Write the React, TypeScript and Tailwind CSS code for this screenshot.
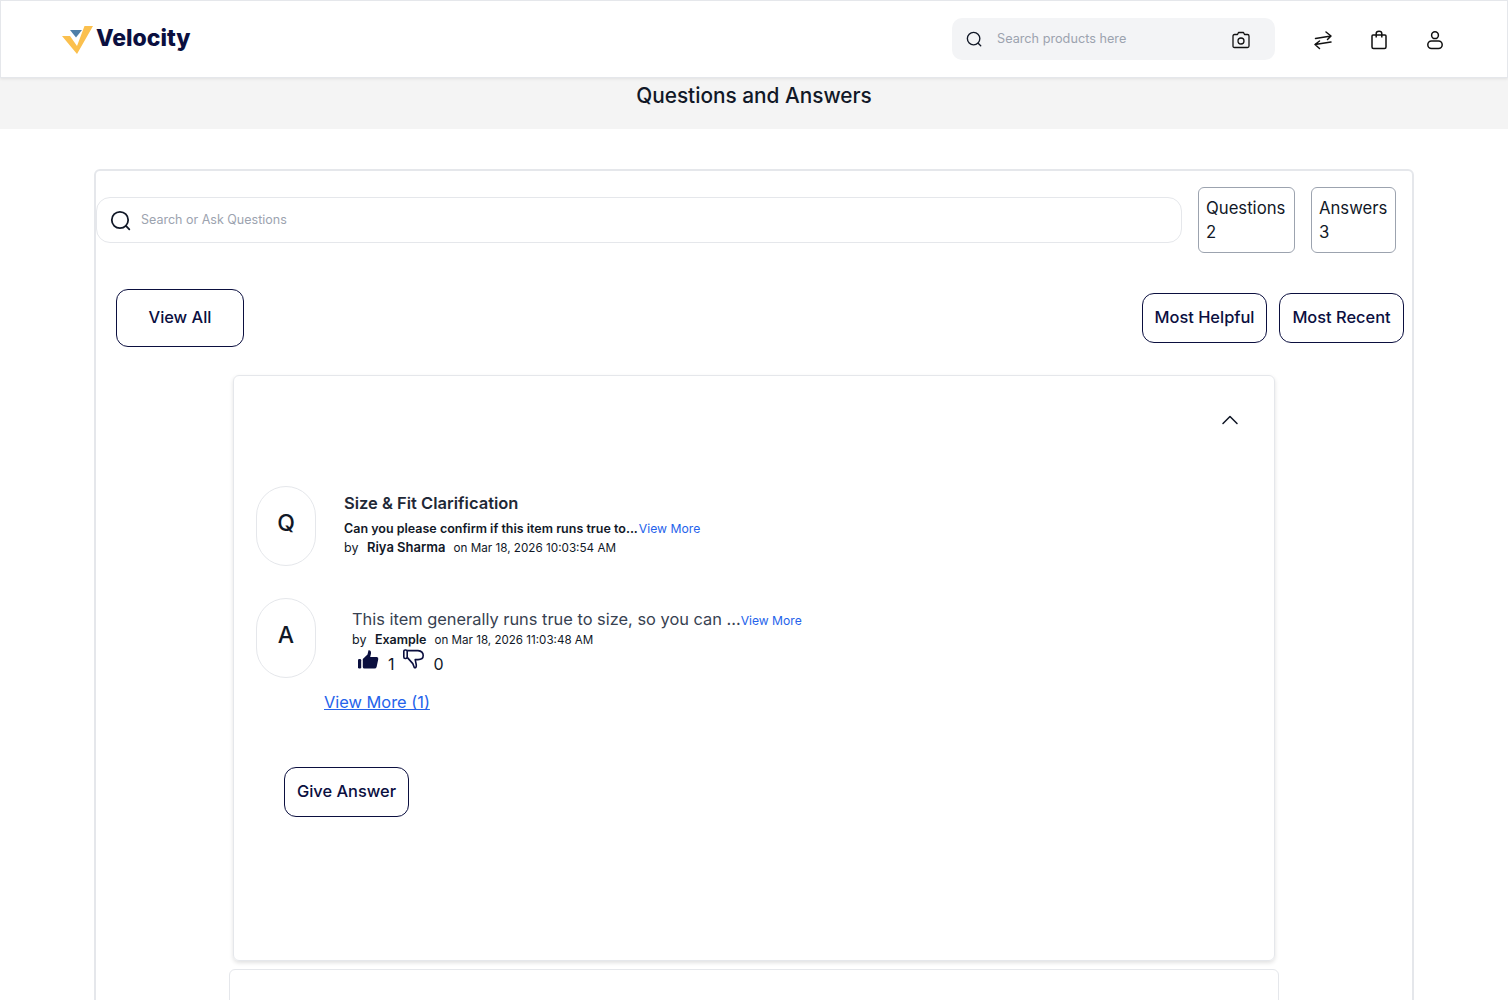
import { ChevronUp } from "lucide-react";

const navy = "text-[#0b0f3f]";

function SearchIcon({ size = 18 }: { size?: number }) {
  return (
    <svg width={size} height={size} viewBox="0 0 20 20" fill="none" stroke="#111827" strokeWidth="1.7" strokeLinecap="round">
      <circle cx="9.5" cy="9.5" r="7.8" />
      <path d="M15.2 15.2 L18.4 18.4" />
    </svg>
  );
}

function Logo() {
  return (
    <svg width="31" height="28" viewBox="0 0 31 28">
      <polygon points="0,10 8,10 15,20 22.5,0 31,0 15,28" fill="#fbc04e" />
      <polygon points="8,4 20,4 14,11.5" fill="#4f7fa8" />
    </svg>
  );
}

function ThumbUp() {
  return (
    <svg width="21" height="19" viewBox="0 0 21 19" className="mt-[1px]" fill="#0b0f3f">
      <rect x="0" y="9" width="3.2" height="9.5" rx="1.2" />
      <path d="M4.8 9 L9.5 4.5 L10.5 0.3 Q13.2 0 13 3.5 L12.2 7 H18.8 Q20.8 7.3 20.2 9.5 L18.6 17 Q18.2 18.6 16.4 18.6 H6.5 Q4.8 18.6 4.8 17 Z" />
    </svg>
  );
}

function ThumbDown() {
  return (
    <svg width="21" height="20" viewBox="0 0 21 20" fill="none" stroke="#0b0f3f" strokeWidth="1.6" strokeLinejoin="round">
      <rect x="0.8" y="1" width="3.4" height="8.5" rx="1.4" />
      <path d="M4.2 1.6 H15 Q20.2 2 20.2 6.5 Q20.2 10.6 15 10.6 H12.2 L13.3 16 Q13.5 19 11.4 18.8 L9.8 14.6 L4.2 8.4" />
    </svg>
  );
}

function HeaderIcons() {
  return (
    <div className="flex items-center gap-[36px] ml-[38px] mt-[2px]">
      <svg width="20" height="20" viewBox="0 0 20 20" fill="none" stroke="#111" strokeWidth="1.5" strokeLinecap="round" strokeLinejoin="round">
        <path d="M2.5 8.5 L18 6 M13 2 L18 6 L14.5 9.5" />
        <path d="M18 12 L2 14.5 M6.5 11 L2 14.5 L6.5 18.5" />
      </svg>
      <svg width="20" height="20" viewBox="0 0 20 20" fill="none" stroke="#111" strokeWidth="1.5" strokeLinejoin="round">
        <path d="M4 5 H16 Q17 5 17 6 V17 Q17 18.5 15.5 18.5 H4.5 Q3 18.5 3 17 V6 Q3 5 4 5 Z" />
        <path d="M7.2 7.5 V3.5 Q7.2 1.3 10 1.3 Q12.8 1.3 12.8 3.5 V7.5" />
      </svg>
      <svg width="20" height="20" viewBox="0 0 20 20" fill="none" stroke="#111" strokeWidth="1.5">
        <circle cx="10" cy="5.2" r="3.4" />
        <rect x="2.8" y="11" width="14.4" height="7.5" rx="3.7" />
      </svg>
    </div>
  );
}

function Header() {
  return (
    <header className="h-[78px] bg-white border border-[#e5e7eb] shadow-[0_1px_3px_rgba(0,0,0,0.08)] flex items-center justify-between pl-[61px] pr-[62px] relative z-10">
      <div className="flex items-center gap-[3px] mt-[1px]">
        <Logo />
        <span className={`text-[23px] font-extrabold mt-[-2px] ${navy}`}>Velocity</span>
      </div>
      <div className="flex items-center">
        <div className="w-[323px] h-[42px] rounded-[10px] bg-[#f3f4f6] flex items-center pl-[14px] pr-[25px] mt-[-1px]">
          <SearchIcon size={16} />
          <span className="ml-[15px] mt-[1px] text-[12.7px] text-[#9ca3af] flex-1">Search products here</span>
          <svg width="18" height="18" viewBox="0 0 18 18" fill="none" stroke="#111" strokeWidth="1.3" strokeLinejoin="round" className="mt-[2px]">
            <path d="M2.5 3.5 H5.5 L6.5 1.5 H11.5 L12.5 3.5 H15.5 Q17 3.5 17 5 V15 Q17 16.5 15.5 16.5 H2.5 Q1 16.5 1 15 V5 Q1 3.5 2.5 3.5 Z" />
            <circle cx="9" cy="10" r="3" />
          </svg>
        </div>
        <HeaderIcons />
      </div>
    </header>
  );
}

function StatBox({ label, value, width }: { label: string; value: number; width: string }) {
  return (
    <div className={`h-[66px] border border-[#9ca3af] rounded-[6px] pl-[7px] pr-[6px] pt-[8px] text-[16.7px] leading-[24px] text-[#111827] ${width}`}>
      <div>{label}</div>
      <div>{value}</div>
    </div>
  );
}

function OutlineButton({ label, className }: { label: string; className: string }) {
  return (
    <button className={`border border-[#0b0f3f] rounded-[12px] bg-white text-[16.4px] font-medium pb-[2px] ${navy} ${className}`}>
      {label}
    </button>
  );
}

function Avatar({ letter }: { letter: string }) {
  return (
    <div className="w-[60px] h-[80px] shrink-0 rounded-[30px] border border-[#e5e7eb] flex items-center justify-center text-[23px] font-medium text-[#111827] pb-[5px]">
      {letter}
    </div>
  );
}

function QuestionCard() {
  return (
    <div className="w-[1042px] h-[586px] mt-[28px] ml-[137px] border border-[#e5e7eb] rounded-[6px] shadow-[0_2px_4px_rgba(0,0,0,0.12)] relative pt-[110px] pl-[22px]">
      <ChevronUp className="absolute right-[30px] top-[30px] text-[#111827]" size={28} strokeWidth={1.3} />

      <div className="flex">
        <Avatar letter="Q" />
        <div className="ml-[28px] pt-[5px]">
          <div className="text-[16.5px] leading-[24px] font-semibold text-[#1f2937]">Size &amp; Fit Clarification</div>
          <div className="text-[12.5px] leading-[19px] mt-[4px] font-semibold text-[#111827]">
            Can you please confirm if this item runs true to...
            <span className="font-normal text-[12.2px] ml-[1px] text-[#2563eb]">View More</span>
          </div>
          <div className="text-[12.5px] leading-[19px] text-[#111827]">
            by <span className="font-semibold text-[13px] ml-[5px]">Riya Sharma</span>
            <span className="ml-[8px] text-[11.7px]">on Mar 18, 2026 10:03:54 AM</span>
          </div>
        </div>
      </div>

      <div className="flex mt-[32px]">
        <Avatar letter="A" />
        <div className="ml-[36px] pt-[9px]">
          <div className="text-[16.4px] leading-[25px] text-[#374151]">
            This item generally runs true to size, so you can ...
            <span className="text-[12.1px] text-[#2563eb]">View More</span>
          </div>
          <div className="text-[12.5px] leading-[14px] text-[#111827]">
            by <span className="font-semibold ml-[5px]">Example</span>
            <span className="ml-[8px] text-[11.6px]">on Mar 18, 2026 11:03:48 AM</span>
          </div>
          <div className="flex items-start text-[16px] leading-[22px] text-[#111827] mt-[2px] pl-[6px]">
            <ThumbUp />
            <span className="ml-[9px] mt-[4px]">1</span>
            <span className="ml-[8px]"><ThumbDown /></span>
            <span className="ml-[10px] mt-[4px]">0</span>
          </div>
        </div>
      </div>

      <a className="block ml-[68px] mt-[12px] text-[16.4px] leading-[24px] text-[#2563eb] underline w-fit">View More (1)</a>

      <OutlineButton label="Give Answer" className="block ml-[28px] mt-[53px] w-[125px] h-[50px]" />
    </div>
  );
}

export default function App() {
  return (
    <div className="h-screen overflow-hidden bg-white font-['Inter','Liberation_Sans',sans-serif]">
      <Header />
      <div className="h-[51px] bg-[#f4f4f4] text-center text-[20.8px] leading-[36px] font-medium text-[#111827]">
        Questions and Answers
      </div>

      <main className="w-[1320px] ml-[94px] mt-[40px] border-2 border-[#e5e7eb] rounded-[6px] h-[900px]">
        <div className="flex items-center pt-[16px]">
          <div className="w-[1086px] h-[46px] border border-[#e5e7eb] rounded-[14px] flex items-center pl-[13px]">
            <SearchIcon size={21} />
            <span className="ml-[10px] text-[12.5px] text-[#9ca3af]">Search or Ask Questions</span>
          </div>
          <div className="flex gap-[16px] ml-[16px]">
            <StatBox label="Questions" value={2} width="w-[97px]" />
            <StatBox label="Answers" value={3} width="w-[85px]" />
          </div>
        </div>

        <div className="flex items-center justify-between mt-[36px] pl-[20px] pr-[8px]">
          <OutlineButton label="View All" className="w-[128px] h-[58px]" />
          <div className="flex gap-[12px]">
            <OutlineButton label="Most Helpful" className="w-[125px] h-[50px]" />
            <OutlineButton label="Most Recent" className="w-[125px] h-[50px]" />
          </div>
        </div>

        <QuestionCard />

        <div className="w-[1050px] h-[100px] ml-[133px] mt-[8px] border border-[#e5e7eb] rounded-[6px]" />
      </main>
    </div>
  );
}
